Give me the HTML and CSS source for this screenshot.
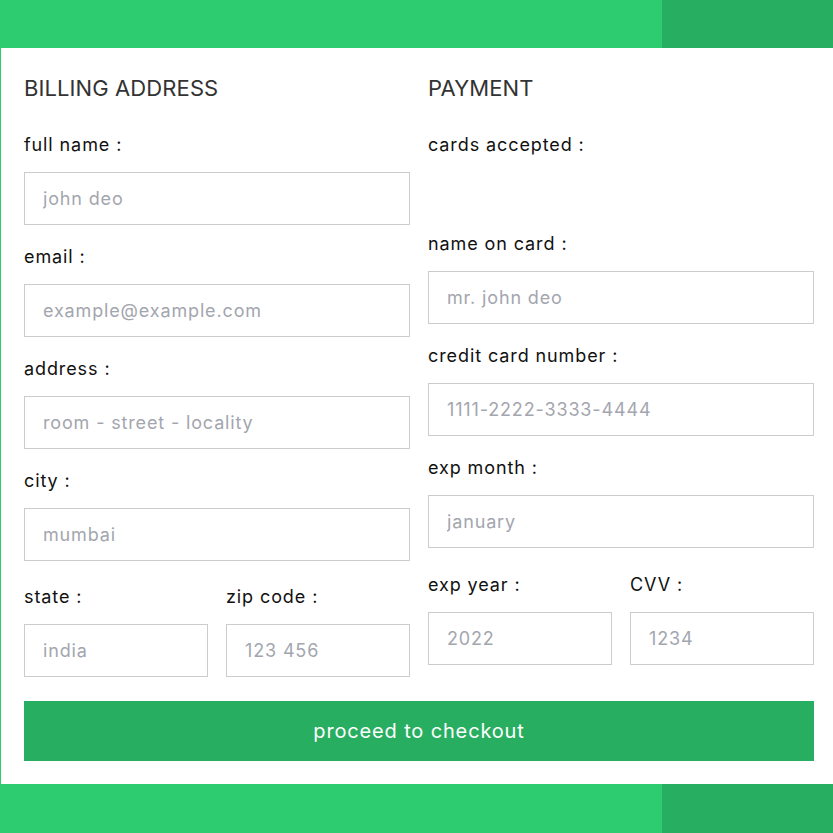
FILE: index.html
```html
<!DOCTYPE html>
<html lang="en">
<head>
<meta charset="utf-8">
<title>Checkout</title>
<link rel="stylesheet" href="styles.css">
</head>
<body>
<div class="container">
  <form class="form">
    <div class="row">
      <div class="col">
        <h3 class="title">billing address</h3>
        <div class="inputBox">
          <span class="label">full name :</span>
          <input type="text" placeholder="john deo">
        </div>
        <div class="inputBox">
          <span class="label">email :</span>
          <input type="email" placeholder="example@example.com">
        </div>
        <div class="inputBox">
          <span class="label">address :</span>
          <input type="text" placeholder="room - street - locality">
        </div>
        <div class="inputBox">
          <span class="label">city :</span>
          <input type="text" placeholder="mumbai">
        </div>
        <div class="flex flex-left">
          <div class="inputBox">
            <span class="label">state :</span>
            <input type="text" placeholder="india">
          </div>
          <div class="inputBox">
            <span class="label">zip code :</span>
            <input type="text" placeholder="123 456">
          </div>
        </div>
      </div>
      <div class="col">
        <h3 class="title">payment</h3>
        <div class="inputBox">
          <span class="label">cards accepted :</span>
          <div class="cards"></div>
        </div>
        <div class="inputBox">
          <span class="label">name on card :</span>
          <input type="text" placeholder="mr. john deo">
        </div>
        <div class="inputBox">
          <span class="label">credit card number :</span>
          <input type="text" placeholder="1111-2222-3333-4444">
        </div>
        <div class="inputBox">
          <span class="label">exp month :</span>
          <input type="text" placeholder="january">
        </div>
        <div class="flex flex-right">
          <div class="inputBox">
            <span class="label">exp year :</span>
            <input type="text" placeholder="2022">
          </div>
          <div class="inputBox">
            <span class="label">CVV :</span>
            <input type="text" placeholder="1234">
          </div>
        </div>
      </div>
    </div>
    <button type="button" class="submit-btn">proceed to checkout</button>
  </form>
</div>
</body>
</html>
```
FILE: styles.css
```css
* {
  box-sizing: border-box;
  margin: 0;
  padding: 0;
}

html, body {
  height: 100%;
}

body {
  font-family: Inter, "Open Sans", sans-serif;
  background: linear-gradient(90deg, #2ecc71 0, #2ecc71 662px, #27ae60 662px, #27ae60 100%);
  padding-top: 48px;
}

.container {
  margin-left: 1px;
  background: #fff;
  padding: 22px 19px 23px 23px;
}

.row {
  display: flex;
  gap: 18px;
}

.col {
  flex: 1 1 0;
  min-width: 0;
}

.title {
  font-size: 22px;
  line-height: 36px;
  font-weight: 400;
  color: #333;
  text-transform: uppercase;
  letter-spacing: 0.1px;
  margin-bottom: 25px;
}

.inputBox {
  margin-top: 18px;
}

.label {
  display: block;
  font-size: 18px;
  line-height: 27px;
  color: #111;
  letter-spacing: 0.9px;
  margin-bottom: 14px;
}

.inputBox input {
  display: block;
  width: 100%;
  height: 53px;
  border: 1px solid #ccc;
  padding: 12px 18px;
  font-family: inherit;
  font-size: 18px;
  line-height: 27px;
  letter-spacing: 0.85px;
  color: #333;
  outline: none;
  background: #fff;
}

.inputBox input::placeholder {
  color: #a3a6ae;
}

.cards {
  height: 40px;
}

.flex {
  display: flex;
  gap: 18px;
}

.flex .inputBox {
  flex: 1 1 0;
  min-width: 0;
}

.flex-left {
  margin-top: 4px;
}

.flex-right {
  margin-top: 5px;
}

.submit-btn {
  display: block;
  width: 100%;
  height: 60px;
  margin-top: 24px;
  border: none;
  background: #27ae60;
  color: #fff;
  font-family: inherit;
  font-size: 20px;
  letter-spacing: 0.85px;
  cursor: pointer;
}
```
